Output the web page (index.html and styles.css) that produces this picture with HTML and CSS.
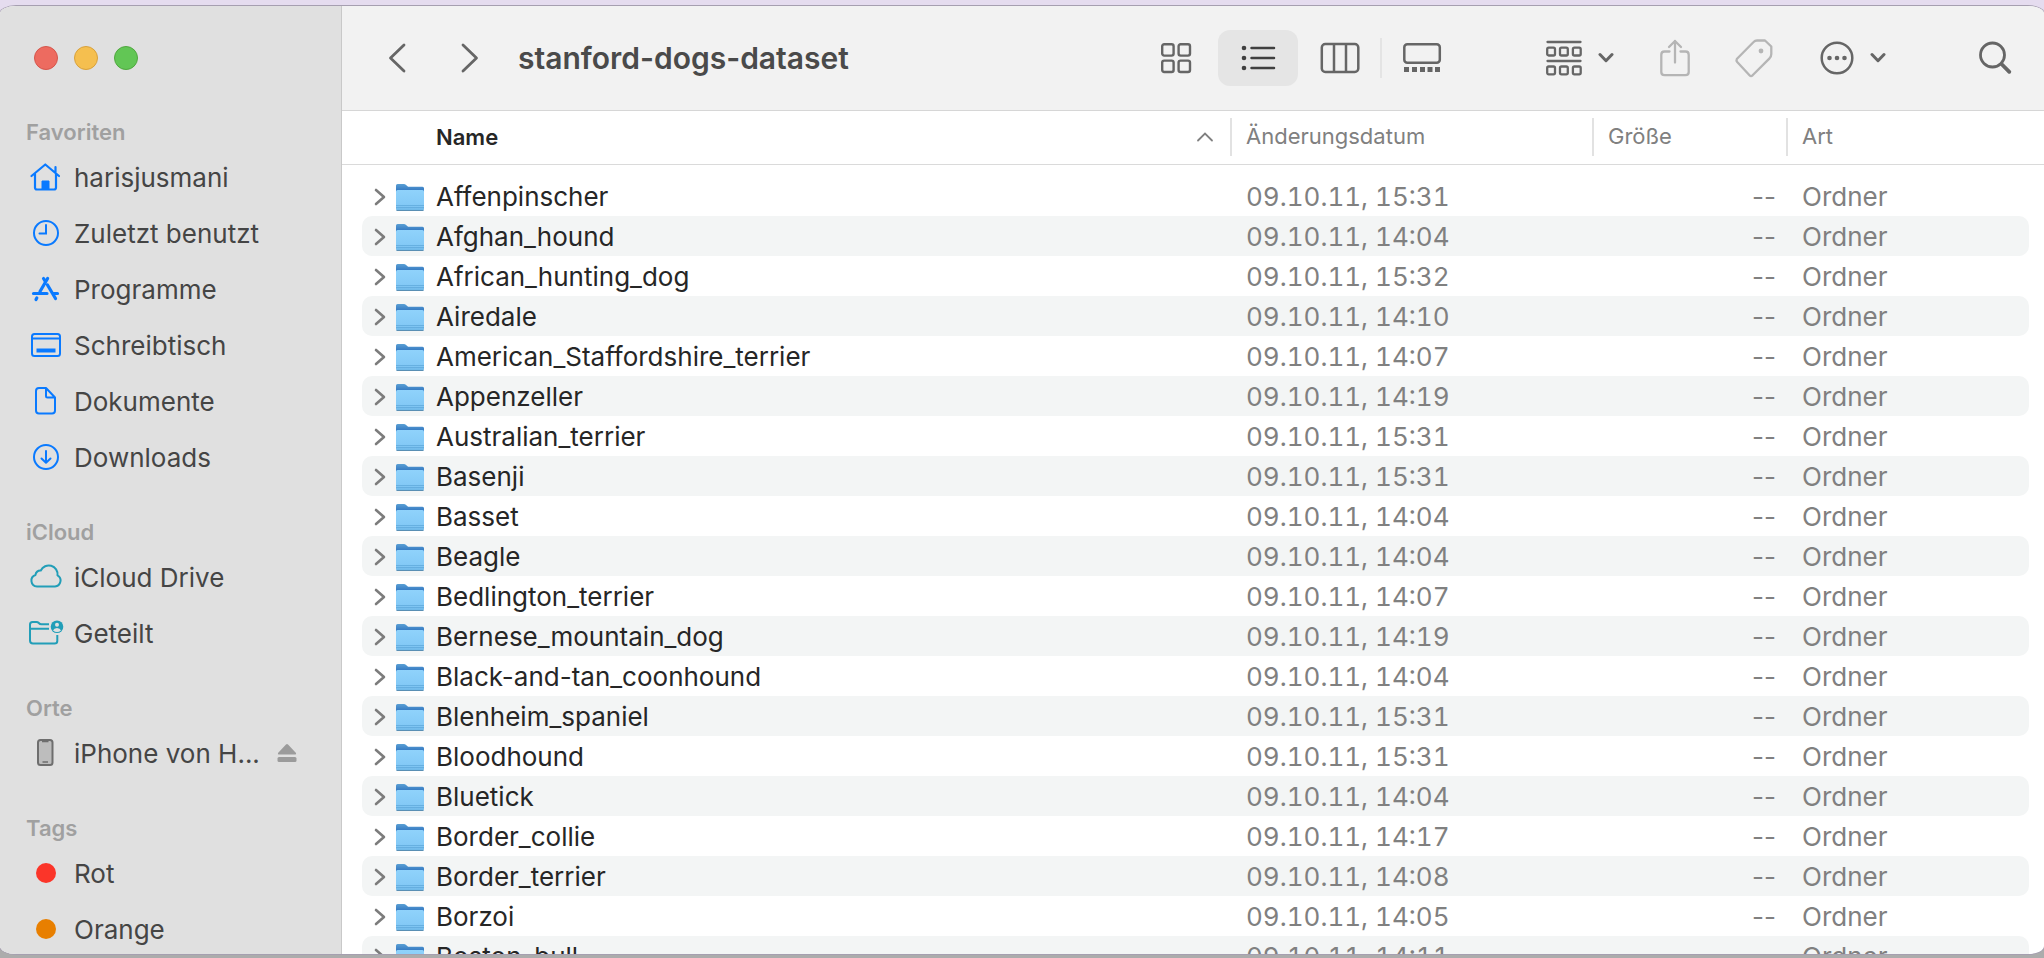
FILE: index.html
```html
<!DOCTYPE html>
<html lang="de">
<head>
<meta charset="utf-8">
<meta name="viewport" content="width=device-width, initial-scale=1">
<title>stanford-dogs-dataset</title>
<link rel="stylesheet" href="styles.css">
</head>
<body>
<svg class="defs" aria-hidden="true">
  <defs>
    <linearGradient id="folder-front" x1="0" y1="0" x2="0" y2="1">
      <stop offset="0" stop-color="#8fd2fb"/><stop offset="0.75" stop-color="#83c9f6"/><stop offset="1" stop-color="#6db6e6"/>
    </linearGradient>
    <linearGradient id="folder-back" x1="0" y1="0" x2="0" y2="1">
      <stop offset="0" stop-color="#5a9fd4"/><stop offset="0.3" stop-color="#2f74c0"/>
    </linearGradient>
  </defs>
  <symbol id="folder" viewBox="0 0 32 32">
    <path d="M2 28V4.500Q2 3 3.500 3H10q1 0 1.800.8L13.500 5.200q.6.600 1.500.600H28.500Q30 5.800 30 7.300V28z" fill="url(#folder-back)"/>
    <path d="M2 10.500Q2 9 3.500 9H28.500Q30 9 30 10.500V28Q30 29.500 28.500 29.500H3.500Q2 29.500 2 28z" fill="url(#folder-front)"/>
    <path d="M2 24.500H30M2 26.500H30" stroke="#5fa9dc" stroke-width="0.800"/>
    <path d="M2.500 29.500H29.500" stroke="#5a8fb4" stroke-width="1"/>
  </symbol>
  <symbol id="disclose" viewBox="0 0 12 18"><path d="M2 2L10 9L2 16" fill="none" stroke="currentColor" stroke-width="2.600" stroke-linecap="round" stroke-linejoin="round"/></symbol>
  <symbol id="caret" viewBox="0 0 16 12"><path d="M2 2.500L8 8.700L14 2.500" fill="none" stroke="currentColor" stroke-width="3" stroke-linecap="round" stroke-linejoin="round"/></symbol>
</svg>

<div class="window">
  <nav class="sidebar" aria-label="Seitenleiste">
    <div class="lights">
      <button class="light light-close" aria-label="Schließen"></button>
      <button class="light light-min" aria-label="Minimieren"></button>
      <button class="light light-max" aria-label="Vergrößern"></button>
    </div>

    <section class="group">
      <h2 class="group-title">Favoriten</h2>
      <a class="item blue" href="#home"><svg class="icon" viewBox="0 0 36 36" fill="none" stroke="currentColor" stroke-width="2.200" stroke-linecap="round" stroke-linejoin="round"><path d="M3.500 17L17.300 5.500L31 17M7 15V28.500Q7 30.500 9 30.500H26Q28 30.500 28 28.500V15M27.500 13V8"/><path d="M14 30V22H21V30z" fill="currentColor" stroke-width="1"/></svg><span>harisjusmani</span></a>
      <a class="item blue" href="#recent"><svg class="icon" viewBox="0 0 36 36" fill="none" stroke="currentColor" stroke-width="2" stroke-linecap="round"><circle cx="18" cy="18" r="12"/><path d="M18 10V18.500H11.500"/></svg><span>Zuletzt benutzt</span></a>
      <a class="item blue" href="#apps"><svg class="icon" viewBox="0 0 36 36" fill="none" stroke="currentColor" stroke-width="3.200" stroke-linecap="round"><path d="M19.600 7.500L12 20.500M15.500 7.500L17.300 10.300M19.500 14L27.500 27.500M5.500 22.500H19M25.500 22.500H29.500M8.800 27L8 28.500"/></svg><span>Programme</span></a>
      <a class="item blue" href="#desktop"><svg class="icon" viewBox="0 0 36 36" fill="none" stroke="currentColor" stroke-width="2"><rect x="4" y="7" width="28" height="22" rx="2.500"/><path d="M4 11.500H32"/><rect x="9" y="22" width="18" height="3" fill="currentColor" stroke-width="1"/></svg><span>Schreibtisch</span></a>
      <a class="item blue" href="#documents"><svg class="icon" viewBox="0 0 36 36" fill="none" stroke="currentColor" stroke-width="2" stroke-linejoin="round"><path d="M8 8Q8 5 11 5H18L27 14.500V27.500Q27 30.500 24 30.500H11Q8 30.500 8 27.500zM18 5V13Q18 14.500 19.500 14.500H27"/></svg><span>Dokumente</span></a>
      <a class="item blue" href="#downloads"><svg class="icon" viewBox="0 0 36 36" fill="none" stroke="currentColor" stroke-width="2" stroke-linecap="round" stroke-linejoin="round"><circle cx="18" cy="18" r="12"/><path d="M18 12V23.500M13.500 19.500L18 23.700L22.500 19.500"/></svg><span>Downloads</span></a>
    </section>

    <section class="group">
      <h2 class="group-title">iCloud</h2>
      <a class="item teal" href="#icloud"><svg class="icon" viewBox="0 0 36 36" fill="none" stroke="currentColor" stroke-width="2" stroke-linejoin="round"><path d="M9 27.500H27A6 6 0 0 0 29.500 16.300A8.800 8.800 0 0 0 12.800 11.500A4.800 4.800 0 0 0 7.500 16A5.900 5.900 0 0 0 9 27.500z"/></svg><span>iCloud Drive</span></a>
      <a class="item teal" href="#shared"><svg class="icon" viewBox="0 0 36 36" fill="none" stroke="currentColor" stroke-width="2"><path d="M29.300 20V26Q29.300 28.500 26.500 28.500H5Q2 28.500 2 25.500V9.500Q2 7 4.500 7H8.500Q9.800 7 10.800 8Q11.800 9.200 13.500 9.200H21M2 13.800H21"/><circle cx="29" cy="11.800" r="6.300" fill="currentColor" stroke="none"/><circle cx="29" cy="9.800" r="2" fill="#e0e0e0" stroke="none"/><path d="M25 15.500Q26 12.900 29 12.900T33 15.500Q31 17 29 17T25 15.500z" fill="#e0e0e0" stroke="none"/></svg><span>Geteilt</span></a>
    </section>

    <section class="group">
      <h2 class="group-title">Orte</h2>
      <div class="item">
        <a class="device" href="#iphone"><svg class="icon" viewBox="0 0 36 36"><rect x="10" y="5" width="14.500" height="25" rx="2.500" fill="#bdbdbd" stroke="#6e6e6e" stroke-width="2"/><path d="M14 6.500H20.500M14.500 27H20" stroke="#6e6e6e" stroke-width="1.500"/></svg><span class="device-name">iPhone von H...</span></a>
        <button class="eject" aria-label="Auswerfen"><svg width="20" height="20" viewBox="0 0 20 20" fill="#9b9b9b"><path d="M9 1.500Q10 .5 11 1.500L19 10Q19.700 11.500 18 11.500H2Q.3 11.500 1 10z"/><rect x="0.500" y="14" width="19" height="5" rx="1.500"/></svg></button>
      </div>
    </section>

    <section class="group">
      <h2 class="group-title">Tags</h2>
      <a class="item" href="#red"><span class="icon tag-slot"><span class="tag tag-red"></span></span><span>Rot</span></a>
      <a class="item" href="#orange"><span class="icon tag-slot"><span class="tag tag-orange"></span></span><span>Orange</span></a>
    </section>
  </nav>

  <main class="main">
    <header class="toolbar">
      <div class="history">
        <button class="tool" aria-label="Zurück"><svg width="18" height="30" viewBox="0 0 18 30" fill="none" stroke="currentColor" stroke-width="2.800" stroke-linecap="round" stroke-linejoin="round"><path d="M16 2L2.500 15L16 28"/></svg></button>
        <button class="tool" aria-label="Vorwärts"><svg width="18" height="30" viewBox="0 0 18 30" fill="none" stroke="currentColor" stroke-width="2.800" stroke-linecap="round" stroke-linejoin="round"><path d="M2 2L15.500 15L2 28"/></svg></button>
      </div>
      <h1 class="title">stanford-dogs-dataset</h1>
      <div class="views">
        <button class="tool view" aria-label="Symbole"><svg width="32" height="32" viewBox="0 0 32 32" fill="none" stroke="currentColor" stroke-width="2.400"><rect x="2.200" y="2.200" width="11.400" height="11.400" rx="2"/><rect x="18.600" y="2.200" width="11.400" height="11.400" rx="2"/><rect x="2.200" y="18.600" width="11.400" height="11.400" rx="2"/><rect x="18.600" y="18.600" width="11.400" height="11.400" rx="2"/></svg></button>
        <button class="tool view view-active" aria-label="Liste" aria-pressed="true"><svg width="36" height="28" viewBox="0 0 36 28" fill="none" stroke="currentColor" stroke-width="2.500" stroke-linecap="round"><path d="M11.500 4H34M11.500 14H34M11.500 24H34"/><g fill="currentColor" stroke="none"><circle cx="4" cy="4" r="2.300"/><circle cx="4" cy="14" r="2.300"/><circle cx="4" cy="24" r="2.300"/></g></svg></button>
        <button class="tool view" aria-label="Spalten"><svg width="40" height="32" viewBox="0 0 40 32" fill="none" stroke="currentColor" stroke-width="2.500"><rect x="1.800" y="2" width="36.500" height="28" rx="3.500"/><path d="M14 2V30M26 2V30"/></svg></button>
        <span class="view-divider"></span>
        <button class="tool view" aria-label="Galerie"><svg width="40" height="32" viewBox="0 0 40 32"><rect x="2.300" y="2.300" width="35.500" height="18.500" rx="3" fill="none" stroke="currentColor" stroke-width="2.500"/><path d="M2 27.500h5M10 27.500h5M18 27.500h5M25.500 27.500h5M33 27.500h5" stroke="currentColor" stroke-width="5"/></svg></button>
      </div>
      <div class="actions">
        <button class="tool menu" aria-label="Gruppieren"><svg width="36" height="36" viewBox="0 0 36 36" fill="none" stroke="currentColor" stroke-width="2.300" stroke-linecap="round"><path d="M1.500 2H34.500M1.500 21H34.500"/><rect x="1.200" y="7.700" width="7.800" height="7.800" rx="1.500"/><rect x="14" y="7.700" width="7.800" height="7.800" rx="1.500"/><rect x="26.900" y="7.700" width="7.800" height="7.800" rx="1.500"/><rect x="1.200" y="26.500" width="7.800" height="7.800" rx="1.500"/><rect x="14" y="26.500" width="7.800" height="7.800" rx="1.500"/><rect x="26.900" y="26.500" width="7.800" height="7.800" rx="1.500"/></svg><svg width="16" height="12"><use href="#caret"/></svg></button>
        <button class="tool" aria-label="Teilen" disabled><svg width="30" height="38" viewBox="0 0 30 38" fill="none" stroke="currentColor" stroke-width="2.300" stroke-linecap="round" stroke-linejoin="round"><path d="M9.500 12.500H4.500Q1.300 12.500 1.300 15.700V33Q1.300 36.200 4.500 36.200H25.500Q28.700 36.200 28.700 33V15.700Q28.700 12.500 25.500 12.500H20.500M15 23.500V2M9 8L15 2L21 8"/></svg></button>
        <button class="tool" aria-label="Tags" disabled><svg width="38" height="40" viewBox="1 0 38 40" overflow="visible" fill="none" stroke="currentColor" stroke-width="2.300" stroke-linejoin="round"><path d="M1.800 21Q1 22.500 2.200 24L14.500 37.200Q16 38.700 17.600 37.300L34.300 20.600Q36.300 18.700 36.300 16V8.500L30 2.500H22Q20 2.500 18.600 4z"/><circle cx="26" cy="13" r="2.400" fill="currentColor" stroke="none"/></svg></button>
        <button class="tool menu" aria-label="Aktionen"><svg width="34" height="34" viewBox="0 0 34 34"><circle cx="17" cy="17" r="15.300" fill="none" stroke="currentColor" stroke-width="2.500"/><g fill="currentColor"><circle cx="9.500" cy="17" r="2.300"/><circle cx="17" cy="17" r="2.300"/><circle cx="24.500" cy="17" r="2.300"/></g></svg><svg width="16" height="12"><use href="#caret"/></svg></button>
        <button class="tool search" aria-label="Suchen"><svg width="34" height="34" viewBox="0 0 34 34" fill="none" stroke="currentColor" stroke-linecap="round"><circle cx="14.500" cy="14" r="12" stroke-width="2.800"/><path d="M23.500 23L31.300 30.800" stroke-width="3.800"/></svg></button>
      </div>
    </header>

    <table class="files">
      <thead>
        <tr class="head-row">
          <th class="head-name" scope="col" aria-sort="ascending">Name<svg class="sort" width="18" height="12" viewBox="0 0 18 12" fill="none" stroke="currentColor" stroke-width="1.800" stroke-linecap="round"><path d="M2 9.500L9 2.500L16 9.500"/></svg></th>
          <th class="head" scope="col">Änderungsdatum</th>
          <th class="head" scope="col">Größe</th>
          <th class="head" scope="col">Art</th>
        </tr>
      </thead>
      <tbody>
        <tr class="row"><td class="name"><button class="disclose" aria-label="Öffnen"><svg width="12" height="18"><use href="#disclose"/></svg></button><svg class="folder"><use href="#folder"/></svg>Affenpinscher</td><td class="date">09.10.11, 15:31</td><td class="size">--</td><td class="kind">Ordner</td></tr>
        <tr class="row"><td class="name"><button class="disclose" aria-label="Öffnen"><svg width="12" height="18"><use href="#disclose"/></svg></button><svg class="folder"><use href="#folder"/></svg>Afghan_hound</td><td class="date">09.10.11, 14:04</td><td class="size">--</td><td class="kind">Ordner</td></tr>
        <tr class="row"><td class="name"><button class="disclose" aria-label="Öffnen"><svg width="12" height="18"><use href="#disclose"/></svg></button><svg class="folder"><use href="#folder"/></svg>African_hunting_dog</td><td class="date">09.10.11, 15:32</td><td class="size">--</td><td class="kind">Ordner</td></tr>
        <tr class="row"><td class="name"><button class="disclose" aria-label="Öffnen"><svg width="12" height="18"><use href="#disclose"/></svg></button><svg class="folder"><use href="#folder"/></svg>Airedale</td><td class="date">09.10.11, 14:10</td><td class="size">--</td><td class="kind">Ordner</td></tr>
        <tr class="row"><td class="name"><button class="disclose" aria-label="Öffnen"><svg width="12" height="18"><use href="#disclose"/></svg></button><svg class="folder"><use href="#folder"/></svg>American_Staffordshire_terrier</td><td class="date">09.10.11, 14:07</td><td class="size">--</td><td class="kind">Ordner</td></tr>
        <tr class="row"><td class="name"><button class="disclose" aria-label="Öffnen"><svg width="12" height="18"><use href="#disclose"/></svg></button><svg class="folder"><use href="#folder"/></svg>Appenzeller</td><td class="date">09.10.11, 14:19</td><td class="size">--</td><td class="kind">Ordner</td></tr>
        <tr class="row"><td class="name"><button class="disclose" aria-label="Öffnen"><svg width="12" height="18"><use href="#disclose"/></svg></button><svg class="folder"><use href="#folder"/></svg>Australian_terrier</td><td class="date">09.10.11, 15:31</td><td class="size">--</td><td class="kind">Ordner</td></tr>
        <tr class="row"><td class="name"><button class="disclose" aria-label="Öffnen"><svg width="12" height="18"><use href="#disclose"/></svg></button><svg class="folder"><use href="#folder"/></svg>Basenji</td><td class="date">09.10.11, 15:31</td><td class="size">--</td><td class="kind">Ordner</td></tr>
        <tr class="row"><td class="name"><button class="disclose" aria-label="Öffnen"><svg width="12" height="18"><use href="#disclose"/></svg></button><svg class="folder"><use href="#folder"/></svg>Basset</td><td class="date">09.10.11, 14:04</td><td class="size">--</td><td class="kind">Ordner</td></tr>
        <tr class="row"><td class="name"><button class="disclose" aria-label="Öffnen"><svg width="12" height="18"><use href="#disclose"/></svg></button><svg class="folder"><use href="#folder"/></svg>Beagle</td><td class="date">09.10.11, 14:04</td><td class="size">--</td><td class="kind">Ordner</td></tr>
        <tr class="row"><td class="name"><button class="disclose" aria-label="Öffnen"><svg width="12" height="18"><use href="#disclose"/></svg></button><svg class="folder"><use href="#folder"/></svg>Bedlington_terrier</td><td class="date">09.10.11, 14:07</td><td class="size">--</td><td class="kind">Ordner</td></tr>
        <tr class="row"><td class="name"><button class="disclose" aria-label="Öffnen"><svg width="12" height="18"><use href="#disclose"/></svg></button><svg class="folder"><use href="#folder"/></svg>Bernese_mountain_dog</td><td class="date">09.10.11, 14:19</td><td class="size">--</td><td class="kind">Ordner</td></tr>
        <tr class="row"><td class="name"><button class="disclose" aria-label="Öffnen"><svg width="12" height="18"><use href="#disclose"/></svg></button><svg class="folder"><use href="#folder"/></svg>Black-and-tan_coonhound</td><td class="date">09.10.11, 14:04</td><td class="size">--</td><td class="kind">Ordner</td></tr>
        <tr class="row"><td class="name"><button class="disclose" aria-label="Öffnen"><svg width="12" height="18"><use href="#disclose"/></svg></button><svg class="folder"><use href="#folder"/></svg>Blenheim_spaniel</td><td class="date">09.10.11, 15:31</td><td class="size">--</td><td class="kind">Ordner</td></tr>
        <tr class="row"><td class="name"><button class="disclose" aria-label="Öffnen"><svg width="12" height="18"><use href="#disclose"/></svg></button><svg class="folder"><use href="#folder"/></svg>Bloodhound</td><td class="date">09.10.11, 15:31</td><td class="size">--</td><td class="kind">Ordner</td></tr>
        <tr class="row"><td class="name"><button class="disclose" aria-label="Öffnen"><svg width="12" height="18"><use href="#disclose"/></svg></button><svg class="folder"><use href="#folder"/></svg>Bluetick</td><td class="date">09.10.11, 14:04</td><td class="size">--</td><td class="kind">Ordner</td></tr>
        <tr class="row"><td class="name"><button class="disclose" aria-label="Öffnen"><svg width="12" height="18"><use href="#disclose"/></svg></button><svg class="folder"><use href="#folder"/></svg>Border_collie</td><td class="date">09.10.11, 14:17</td><td class="size">--</td><td class="kind">Ordner</td></tr>
        <tr class="row"><td class="name"><button class="disclose" aria-label="Öffnen"><svg width="12" height="18"><use href="#disclose"/></svg></button><svg class="folder"><use href="#folder"/></svg>Border_terrier</td><td class="date">09.10.11, 14:08</td><td class="size">--</td><td class="kind">Ordner</td></tr>
        <tr class="row"><td class="name"><button class="disclose" aria-label="Öffnen"><svg width="12" height="18"><use href="#disclose"/></svg></button><svg class="folder"><use href="#folder"/></svg>Borzoi</td><td class="date">09.10.11, 14:05</td><td class="size">--</td><td class="kind">Ordner</td></tr>
        <tr class="row"><td class="name"><button class="disclose" aria-label="Öffnen"><svg width="12" height="18"><use href="#disclose"/></svg></button><svg class="folder"><use href="#folder"/></svg>Boston_bull</td><td class="date">09.10.11, 14:11</td><td class="size">--</td><td class="kind">Ordner</td></tr>
      </tbody>
    </table>
  </main>
</div>
</body>
</html>
```
FILE: styles.css
```css
* { box-sizing: border-box; }

body {
  margin: 0;
  height: 100vh;
  padding: 6px 0 4px;
  overflow: hidden;
  background: linear-gradient(#e5dcef 0 50%, #acacac 50%);
  font-family: Inter, "Liberation Sans", sans-serif;
  font-size: 26px;
  color: #262626;
}

button {
  padding: 0;
  border: 0;
  background: none;
  color: inherit;
  font: inherit;
}

svg { display: block; flex: none; }
.defs { position: absolute; width: 0; height: 0; }

.window {
  display: flex;
  height: 100%;
  overflow: hidden;
  border-radius: 16px / 8px;
  background: #fff;
  box-shadow: 0 0 0 1px #a69fb0;
}

/* Sidebar */
.sidebar {
  flex: none;
  width: 342px;
  overflow: hidden;
  border-right: 1px solid #c9c9c9;
  background: #e0e0e0;
  color: #454545;
}

.lights {
  display: flex;
  gap: 16px;
  padding: 40px 0 45px 34px;
}

.light {
  width: 24px;
  height: 24px;
  border: 1px solid;
  border-radius: 50%;
}
.light-close { background: #ed6b60; border-color: #d5564c; }
.light-min { background: #f5bf4f; border-color: #d8a13c; }
.light-max { background: #62c655; border-color: #50a73f; }

.group { padding: 0 26px; margin-bottom: 30px; }
.group-title {
  margin: 0;
  height: 34px;
  line-height: 34px;
  font-size: 22px;
  font-weight: 600;
  color: #a0a0a0;
}

.item {
  display: flex;
  align-items: center;
  gap: 10px;
  height: 56px;
  padding-left: 2px;
  color: inherit;
  text-decoration: none;
  white-space: nowrap;
}
.icon { flex: none; width: 36px; height: 36px; }
.blue .icon { color: #0a7aff; }
.teal .icon { color: #229eb8; }

.device {
  display: flex;
  flex: 1;
  align-items: center;
  gap: 10px;
  color: inherit;
  text-decoration: none;
}
.eject { margin-right: 18px; }

.tag-slot { display: grid; place-items: center; }
.tag { width: 20px; height: 20px; border-radius: 50%; }
.tag-red { background: #fb3529; }
.tag-orange { background: #e87f00; }

/* Toolbar */
.main {
  display: flex;
  flex: 1;
  flex-direction: column;
  min-width: 0;
  overflow: hidden;
}

.toolbar {
  display: flex;
  flex: none;
  align-items: center;
  height: 105px;
  padding: 0 32px 0 46px;
  border-bottom: 1px solid #d6d6d6;
  background: #f2f2f2;
  color: #666;
}

.history { display: flex; gap: 55px; }

.title {
  flex: 1;
  min-width: 0;
  margin: 0 0 0 39px;
  overflow: hidden;
  font-size: 30px;
  font-weight: 600;
  line-height: 40px;
  text-overflow: ellipsis;
  white-space: nowrap;
  color: #4a4a4a;
}

.tool:disabled { color: #b5b5b5; }

.views { display: flex; align-items: center; gap: 2px; }
.view {
  display: grid;
  place-items: center;
  width: 80px;
  height: 56px;
  border-radius: 12px;
}
.view-active { background: #e5e5e5; color: #404040; }
.view-divider { width: 2px; height: 40px; margin: 0 -2px; background: #e4e4e4; }

.actions {
  display: flex;
  align-items: center;
  gap: 46px;
  margin-left: 84px;
}
.menu { display: flex; align-items: center; gap: 16px; }
.search { margin-left: 46px; }

/* File list */
.files { display: block; }
.files thead, .files tbody { display: block; }
.files tbody { padding: 11px 15px 0 20px; }

.head-row, .row {
  display: grid;
  grid-template-columns: minmax(0, 1fr) 362px 194px 258px;
}
.row { grid-template-columns: minmax(0, 1fr) 362px 194px 243px; }

.head-row {
  height: 54px;
  padding: 7px 0 8px;
  border-bottom: 1px solid #dadada;
  font-size: 22px;
  line-height: 36px;
}

.head, .head-name { padding: 0; text-align: left; }
.head {
  padding-left: 14px;
  border-left: 2px solid #e2e2e2;
  font-weight: 400;
  color: #808080;
}
.head-name {
  display: flex;
  align-items: center;
  justify-content: space-between;
  padding: 0 16px 0 94px;
  font-weight: 600;
}
.sort { color: #808080; }

.row { height: 40px; border-radius: 10px; line-height: 42px; }
.row:nth-child(even) { background: #f3f5f5; }
.row td { padding: 0; white-space: nowrap; }
.row td.name { display: flex; align-items: center; padding-left: 12px; }
.disclose { margin-right: 8px; color: #7c7c7c; }
.folder { width: 32px; height: 32px; margin-right: 10px; }
.row td.date { padding-left: 16px; font-variant-numeric: tabular-nums; }
.row td.size { padding-right: 10px; text-align: right; }
.row td.kind { padding-left: 16px; }
.date, .size, .kind { color: #808080; }
```
